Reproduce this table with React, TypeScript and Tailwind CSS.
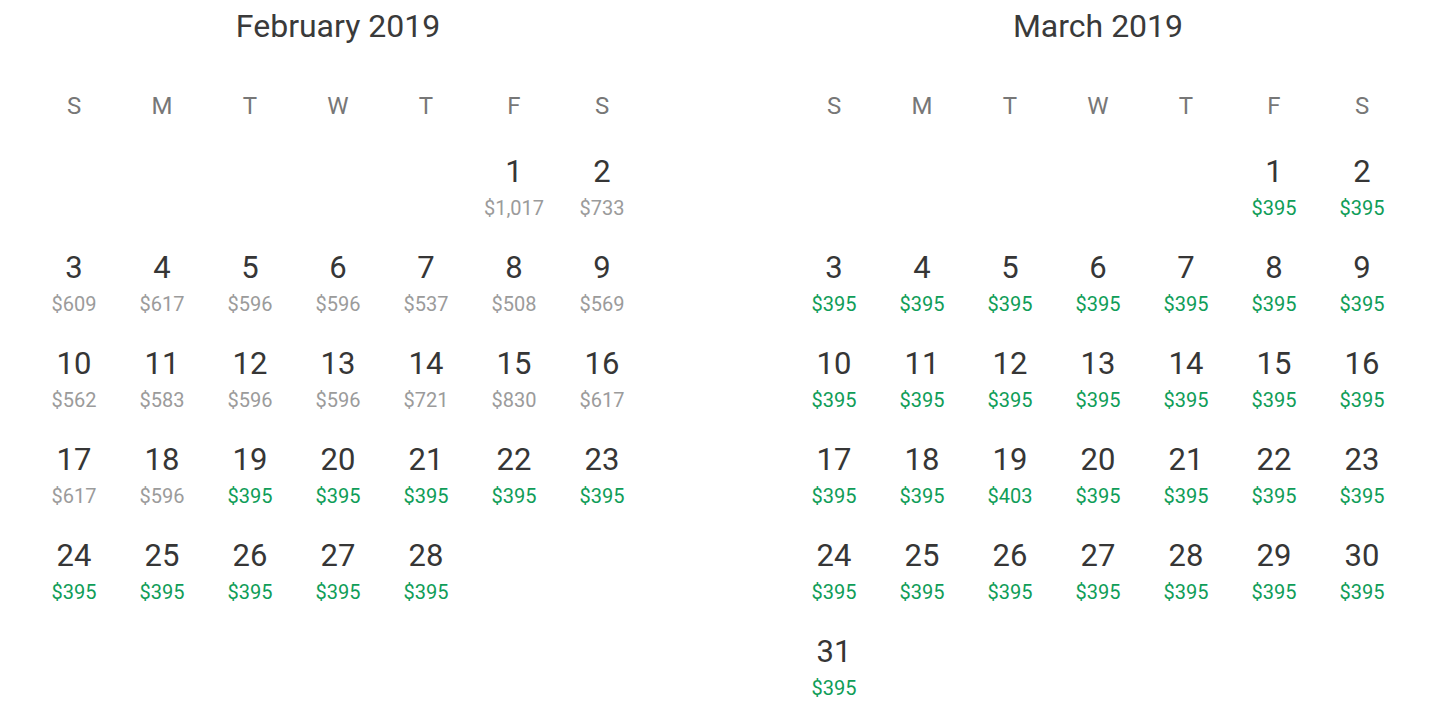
import React from 'react';

type Day = { day: number; price: string; cheap: boolean };

const WEEKDAYS = ['S', 'M', 'T', 'W', 'T', 'F', 'S'];

const febPrices: Record<number, string> = {
  1: '$1,017', 2: '$733', 3: '$609', 4: '$617', 5: '$596', 6: '$596', 7: '$537',
  8: '$508', 9: '$569', 10: '$562', 11: '$583', 12: '$596', 13: '$596', 14: '$721',
  15: '$830', 16: '$617', 17: '$617', 18: '$596',
};

const buildFebruary = (): Day[] =>
  Array.from({ length: 28 }, (_, i) => {
    const d = i + 1;
    return febPrices[d]
      ? { day: d, price: febPrices[d], cheap: false }
      : { day: d, price: '$395', cheap: true };
  });

const buildMarch = (): Day[] =>
  Array.from({ length: 31 }, (_, i) => ({
    day: i + 1,
    price: i + 1 === 19 ? '$403' : '$395',
    cheap: true,
  }));

const Month: React.FC<{ title: string; offset: number; days: Day[] }> = ({ title, offset, days }) => {
  const cells: (Day | null)[] = [...Array(offset).fill(null), ...days];

  return (
    <div className="w-[616px]">
      <h2 className="h-[50px] pt-[1px] text-center text-[32px] leading-[50px] text-[#3a3a3a]">{title}</h2>

      <div className="mt-[35px] mb-[15px] grid grid-cols-7">
        {WEEKDAYS.map((w, i) => (
          <div key={i} className="h-[40px] pt-[1px] text-center text-[24px] leading-[40px] text-[#777777]">
            {w}
          </div>
        ))}
      </div>

      <div className="grid grid-cols-7">
        {cells.map((c, i) => (
          <div key={i} className="h-[96px] pt-[12px] text-center">
            {c && (
              <>
                <div className="h-[40px] text-[31px] leading-[40px] text-[#363636]">{c.day}</div>
                <div
                  className={
                    'mt-[4px] text-[20px] leading-[24px] ' +
                    (c.cheap ? 'text-[#0f9d58]' : 'text-[#9b9b9b]')
                  }
                >
                  {c.price}
                </div>
              </>
            )}
          </div>
        ))}
      </div>
    </div>
  );
};

export default function App() {
  return (
    <div className="flex gap-[144px] bg-white px-[30px] font-['Roboto',sans-serif]">
      <Month title="February 2019" offset={5} days={buildFebruary()} />
      <Month title="March 2019" offset={5} days={buildMarch()} />
    </div>
  );
}
